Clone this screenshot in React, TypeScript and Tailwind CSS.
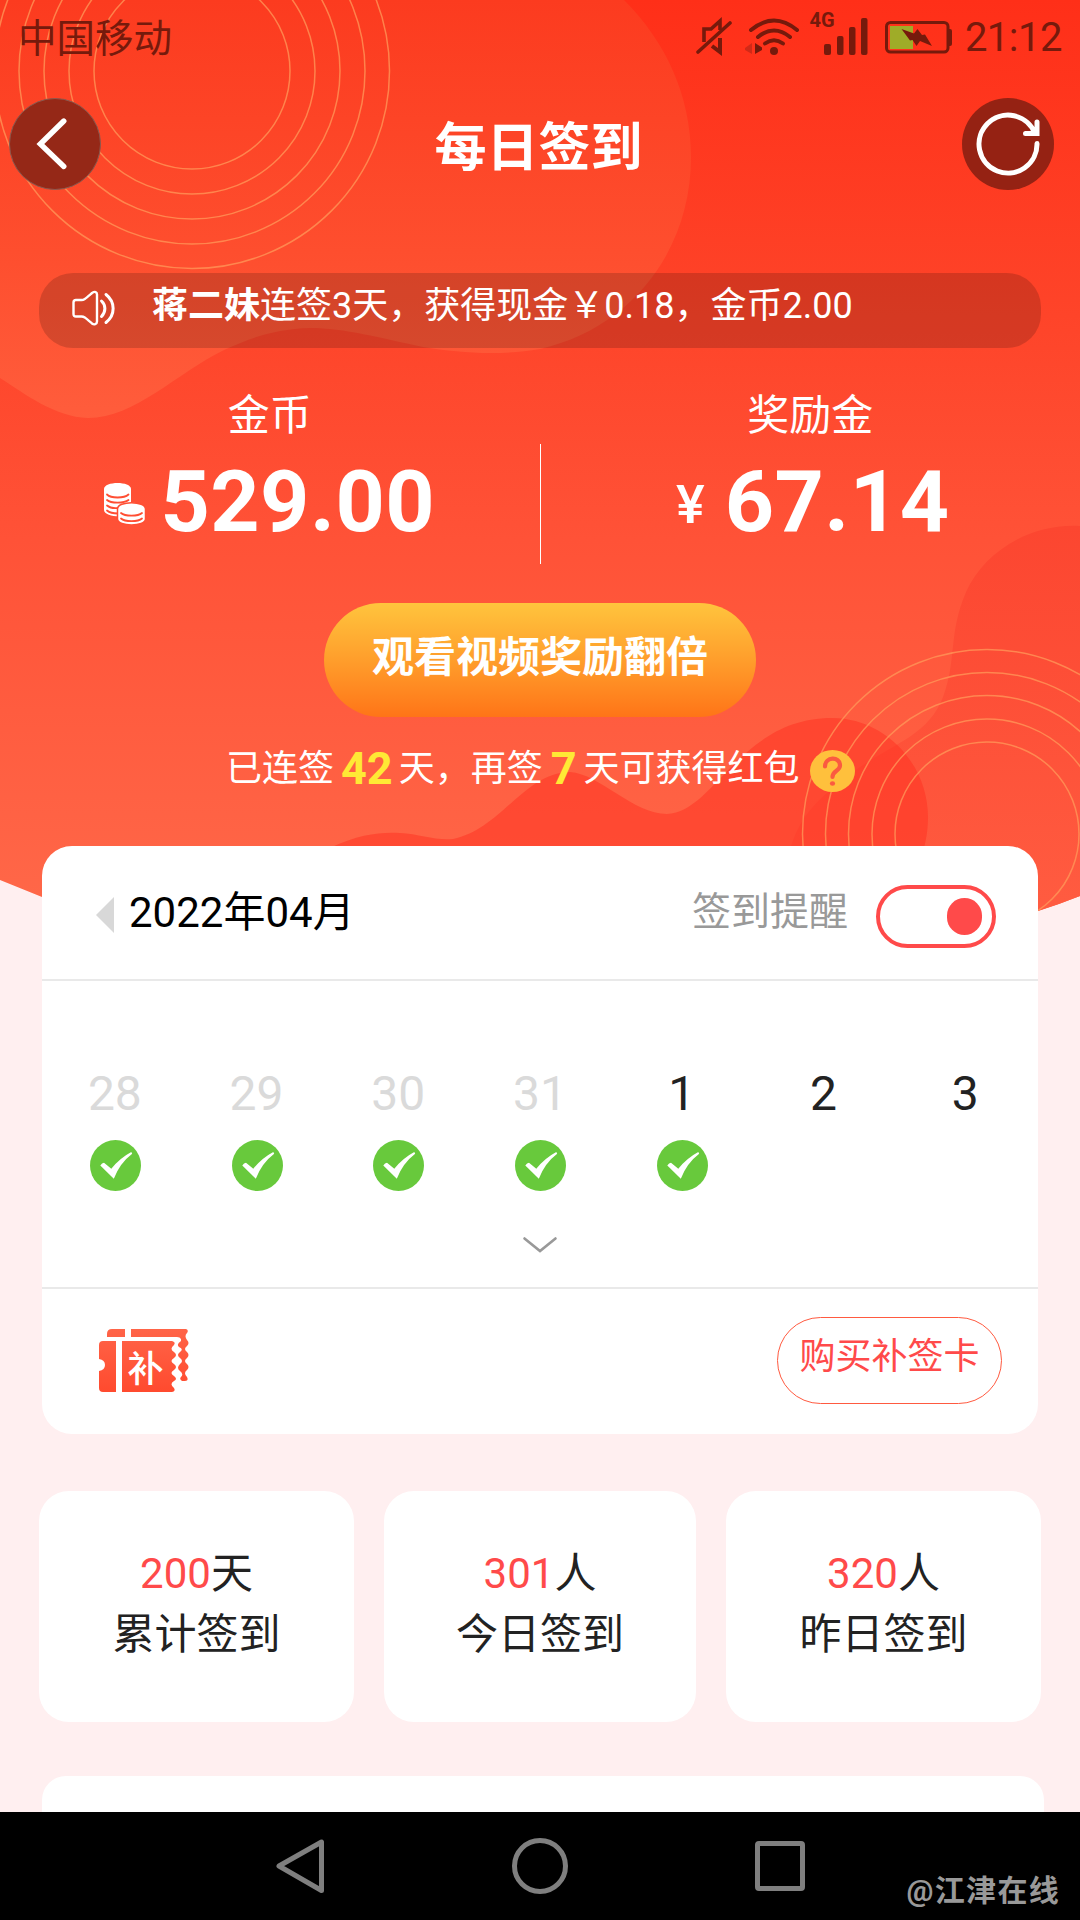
import { clsx } from 'clsx';

interface IDay {
  day: number;
  muted: boolean;
  signed: boolean;
}

interface IStat {
  value: number;
  unit: string;
  label: string;
  width: string;
}

const days: IDay[] = [
  { day: 28, muted: true, signed: true },
  { day: 29, muted: true, signed: true },
  { day: 30, muted: true, signed: true },
  { day: 31, muted: true, signed: true },
  { day: 1, muted: false, signed: true },
  { day: 2, muted: false, signed: false },
  { day: 3, muted: false, signed: false },
];

const stats: IStat[] = [
  { value: 200, unit: '天', label: '累计签到', width: 'w-[315px]' },
  { value: 301, unit: '人', label: '今日签到', width: 'w-[312px]' },
  { value: 320, unit: '人', label: '昨日签到', width: 'w-[315px]' },
];

const topRings = [98, 123, 148, 173, 197.5];
const bottomRings = [92, 115, 138.5, 161.5, 184.5];

const HeaderBackground = () => (
  <svg
    className="absolute top-0 left-0 -z-10"
    width="1080"
    height="960"
    viewBox="0 0 1080 960"
    fill="none"
  >
    <defs>
      <linearGradient id="sky" x1="0" y1="0" x2="0" y2="900" gradientUnits="userSpaceOnUse">
        <stop offset="0" stopColor="#ff2f18" />
        <stop offset="0.35" stopColor="#fe4429" />
        <stop offset="0.6" stopColor="#ff5237" />
        <stop offset="1" stopColor="#ff6748" />
      </linearGradient>
      <linearGradient id="cloud" x1="0" y1="0" x2="0" y2="420" gradientUnits="userSpaceOnUse">
        <stop offset="0" stopColor="#fc3b1f" />
        <stop offset="0.6" stopColor="#fe4e2e" />
        <stop offset="1" stopColor="#ff5d3c" />
      </linearGradient>
      <linearGradient id="blob" x1="0" y1="526" x2="0" y2="900" gradientUnits="userSpaceOnUse">
        <stop offset="0" stopColor="#fc4630" />
        <stop offset="1" stopColor="#ff5b40" />
      </linearGradient>
      <clipPath id="sheet">
        <path d="M0 0H1080V896Q1060 904 1038 911Q540 1080 42 897L0 880Z" />
      </clipPath>
    </defs>
    <g clipPath="url(#sheet)">
      <path d="M0 0H1080V960H0Z" fill="url(#sky)" />
      <path
        d="M0 0H624C666 42 691 96 691 157C691 250 632 328 540 349C500 356 460 353 423 347C380 338 345 328 310 328C275 329 250 338 224 350C175 374 135 418 88 418C55 417 25 394 0 378Z"
        fill="url(#cloud)"
      />
      <path
        d="M1080 526C1030 523 984 552 966 592C948 634 957 660 943 697C927 739 886 745 848 776C815 800 798 820 790 850V960H1080Z"
        fill="url(#blob)"
      />
      <path
        d="M330 848C360 834 380 832 400 833C420 834 436 841 453 839C500 830 525 772 570 772C600 774 633 814 667 814C715 812 740 718 832 718C885 718 928 764 928 817C928 835 924 850 920 860H330Z"
        fill="#ff3020"
        fillOpacity="0.5"
      />
      <g stroke="#ff9a5a" strokeWidth="1.5" strokeOpacity="0.75">
        {topRings.map((r) => (
          <circle key={r} cx="192" cy="71" r={r} />
        ))}
        {bottomRings.map((r) => (
          <circle key={r} cx="987" cy="834" r={r} />
        ))}
      </g>
    </g>
  </svg>
);

const StatusBar = () => (
  <div className="flex h-[75px] items-center justify-between pr-[18px] pl-[18px] text-[#761a0c]">
    <span className="pt-[3px] text-[38.5px] leading-[38px]">中国移动</span>
    <div className="flex items-center">
      <svg width="256" height="75" viewBox="695 0 256 75" fill="none">
        <g stroke="currentColor" strokeWidth="3.6">
          <path d="M697 52L729 23" strokeLinecap="round" />
          <path d="M703 42V29H710L719 21V30" />
          <path d="M711 46L719 52V38" strokeWidth="4" />
        </g>
        <g stroke="currentColor" strokeWidth="4" strokeLinecap="round">
          <path d="M750 30Q773 11 796 30" />
          <path d="M757 37Q773 24 789 37" />
          <path d="M764 43.5Q773 37 782 43.5" />
        </g>
        <circle cx="773" cy="51" r="4" fill="currentColor" />
        <path d="M754 43L761 47.5V50L754 54Z" fill="currentColor" />
        <path d="M751 43V54L744 50V48Z" fill="#d02a18" />
        <text
          x="808.5"
          y="27"
          fontSize="20"
          fontWeight="700"
          fill="currentColor"
          fontFamily="Roboto, sans-serif"
        >
          4G
        </text>
        <g fill="currentColor">
          <rect x="823" y="44" width="7" height="11" rx="2" />
          <rect x="836" y="36" width="6.5" height="19" rx="2" />
          <rect x="848" y="27" width="6.5" height="28" rx="2" />
          <rect x="860" y="18" width="6.5" height="37" rx="2" />
          <rect x="946" y="29" width="5" height="17" rx="2" />
        </g>
        <rect x="889" y="26" width="23" height="23" fill="#9fac28" />
        <rect x="885.5" y="22.5" width="61.5" height="29.5" rx="4" stroke="currentColor" strokeWidth="3" />
        <path d="M900.500 29L913 33.500L916.500 29L921 35L924 34.500L931 46L919 41L915.500 46L911.500 40L909 40.500Z" fill="currentColor" />
      </svg>
      <span className="ml-[13px] text-[40px] leading-[40px] tracking-[-0.5px]">21:12</span>
    </div>
  </div>
);

const SpeakerIcon = () => (
  <svg
    className="mb-[5px]"
    width="44"
    height="36"
    viewBox="0 0 44 36"
    fill="none"
    stroke="#fff"
    strokeLinejoin="round"
  >
    <path
      d="M4 10H9.500C12 10 13 9 20 3C23 1 25 2 25 4.500V31.500C25 34.500 22 35 20 33.500C13 27.500 12 26.500 9.500 26.500H4Q1.500 26.500 1.500 24V12.500Q1.500 10 4 10Z"
      strokeWidth="2.4"
    />
    <path d="M29.500 11C34 15 34 22 29.500 26.500" strokeWidth="3" strokeLinecap="round" />
    <path d="M34 4.500C43.500 12 43.500 25 34 32.500" strokeWidth="3" strokeLinecap="round" />
  </svg>
);

const CoinsIcon = () => (
  <svg className="mt-1" width="41" height="42" viewBox="0 0 41 42" fill="none">
    <path d="M0 6C0 -2 27 -2 27 6V29C27 35 0 35 0 27Z" fill="#fff" />
    <g stroke="#ff4e33" strokeWidth="1.8" strokeLinecap="round">
      <path d="M3 11.500C7 15.500 20 15.500 24.500 11.500" />
      <path d="M3 17C7 20.500 20 20.500 24.500 17" />
      <path d="M3 22.500C6 25 10 25.500 14 25" />
      <path d="M3 27.500C6 30 10 30.500 14 30.500" />
    </g>
    <path
      d="M13.500 26C13.500 17.500 41.500 17.500 41.500 26V36C41.500 44 13.500 44 13.500 36Z"
      fill="#fff"
      stroke="#ff4e33"
      strokeWidth="1.5"
    />
    <g stroke="#ff4e33" strokeWidth="1.8" strokeLinecap="round">
      <path d="M17 30C21 33.500 34 33.500 38 30" />
      <path d="M17 35.500C21 39 34 39 38 35.500" />
    </g>
  </svg>
);

const CheckIcon = () => (
  <svg width="51" height="51" viewBox="0 0 51 51">
    <circle cx="25.500" cy="25.500" r="25.500" fill="#68c93c" />
    <path
      d="M10.300 25.500Q12 23 14 22.800L21.300 28.700Q30 18 41.300 12L42.200 13.800Q30 23 23.800 38.700Z"
      fill="#fff"
    />
  </svg>
);

const TicketIcon = () => (
  <svg width="90" height="64" viewBox="0 0 90 64">
    <defs>
      <linearGradient id="ticket" x1="0" y1="0" x2="0" y2="64" gradientUnits="userSpaceOnUse">
        <stop offset="0" stopColor="#ff6448" />
        <stop offset="1" stopColor="#ff4a2e" />
      </linearGradient>
    </defs>
    <g fill="url(#ticket)">
      <path d="M8 8V5Q8 0 13 0H26V8Z" />
      <path d="M32 0H87Q90 1 88 4Q85 7 88 11Q91 14 88 17Q84 20 88 23Q91 26 88 29Q84 32 88 35Q91 38 88 41Q84 44 88 48Q90 52 86 52H83Q80 50 82 48Q85 45 81 42Q77 39 81 35Q85 32 81 29Q77 26 81 23Q85 20 80 18Q77 15 82 12V10Q81 8 78 8H32Z" />
      <path d="M0 16Q0 12 4 12H17V63H4Q0 63 0 59V42Q6 41 6 36Q6 31 0 30Z" />
      <path d="M23 12H73Q77 13 75 16Q70 20 75 23Q79 26 75 29Q70 32 75 35Q79 38 75 41Q70 44 75 47Q79 50 75 52Q70 55 75 59Q77 62 73 63H23Z" />
    </g>
    <text
      x="28.500"
      y="53"
      fontSize="36"
      fontWeight="500"
      fill="#fff"
      fontFamily="'Noto Sans CJK SC', sans-serif"
    >
      补
    </text>
  </svg>
);

const TitleBar = () => (
  <div className="mt-[23px] flex h-[92px] items-center justify-between pr-[26px] pl-[9px]">
    <button className="flex size-[92px] items-center justify-center rounded-full border border-[#8a5a50] bg-[#952817]">
      <svg width="92" height="92" viewBox="0 0 92 92" fill="none">
        <path
          d="M55 22.500L31 46L55 69"
          stroke="#fff"
          strokeWidth="5.500"
          strokeLinecap="round"
        />
      </svg>
    </button>
    <h1 className="pt-2.5 pl-[14px] text-[52px] leading-[52px] font-bold">每日签到</h1>
    <button className="size-[92px] rounded-full bg-[#952213]">
      <svg width="92" height="92" viewBox="0 0 92 92" fill="none">
        <path
          d="M75 45.500A29 29 0 1 1 73 35.500M75 24V35.500H63.500"
          stroke="#fff"
          strokeWidth="5"
          strokeLinecap="round"
        />
      </svg>
    </button>
  </div>
);

const Balances = () => (
  <div className="mt-[43px] flex h-[173px]">
    <div className="flex flex-1 flex-col items-center">
      <span className="text-[42px] leading-[50px]">金币</span>
      <div className="mt-[18px] flex items-center">
        <CoinsIcon />
        <span className="ml-[15px] text-[86px] leading-[86px] font-bold tracking-[0.5px]">
          529.00
        </span>
      </div>
    </div>
    <div className="mt-[53px] h-[120px] w-px bg-white" />
    <div className="flex flex-1 flex-col items-center">
      <span className="text-[42px] leading-[50px]">奖励金</span>
      <div className="mt-[18px] flex items-center pl-[5px]">
        <span className="pt-[5px] text-[54px] leading-[54px] font-medium">¥</span>
        <span className="ml-5 text-[86px] leading-[86px] font-bold tracking-[0.5px]">67.14</span>
      </div>
    </div>
  </div>
);

const Calendar = () => (
  <section className="mx-[42px] mt-[52px] h-[588px] rounded-[30px] bg-white text-[#222]">
    <div className="flex h-[135px] items-center justify-between border-b-2 border-[#e9e9e9] pr-[42px] pl-[54px]">
      <div className="flex items-center">
        <svg className="mt-1" width="18" height="36" viewBox="0 0 18 36">
          <path d="M18 0V36L0 18Z" fill="#d8d8d8" />
        </svg>
        <span className="ml-[15px] text-[42px] leading-[42px] text-black">2022年04月</span>
      </div>
      <div className="flex items-center">
        <span className="text-[39px] leading-[39px] text-[#999]">签到提醒</span>
        <div className="mt-[7px] ml-7 flex h-[63px] w-[120px] items-center justify-end rounded-full border-4 border-[#ff4a4a] pr-2.5">
          <div className="h-[37px] w-[35px] rounded-full bg-[#ff4a4a]" />
        </div>
      </div>
    </div>
    <div className="flex h-[308px] flex-col items-center border-b-2 border-[#e9e9e9] pt-[89px]">
      <div className="grid w-full grid-cols-7 px-0.5">
        {days.map(({ day, muted, signed }) => (
          <div key={day} className="flex flex-col items-center">
            <span
              className={clsx(
                'text-[48px] leading-[48px]',
                muted ? 'text-[#dadada]' : 'text-[#222]'
              )}
            >
              {day}
            </span>
            <div className="mt-[22px] ml-px h-[51px]">{signed && <CheckIcon />}</div>
          </div>
        ))}
      </div>
      <svg className="mt-[45px]" width="36" height="18" viewBox="0 0 36 18" fill="none">
        <path d="M2.500 2.500L18 15L33.500 2.500" stroke="#999" strokeWidth="2.600" strokeLinecap="round" />
      </svg>
    </div>
    <div className="flex items-start justify-between pr-9 pl-[57px]">
      <div className="mt-10">
        <TicketIcon />
      </div>
      <button className="mt-7 h-[87px] w-[225px] rounded-full border border-[#ff5a40] pb-2 text-[36px] leading-[36px] text-[#ff4a4a]">
        购买补签卡
      </button>
    </div>
  </section>
);

const NavBar = () => (
  <nav className="relative h-[108px] bg-black">
    <svg width="1080" height="108" viewBox="0 0 1080 108" fill="none" stroke="#7f7f7f" strokeWidth="5">
      <path d="M321.500 30V78.500L279 54Z" strokeLinejoin="round" />
      <circle cx="540" cy="54" r="25.500" />
      <rect x="757.500" y="31.500" width="45" height="45" rx="1.500" />
    </svg>
    <span className="absolute right-[20px] bottom-3.5 text-[30px] leading-[30px] font-bold tracking-[1.3px] text-[#999]">
      @江津在线
    </span>
  </nav>
);

const App = () => {
  return (
    <div className="relative isolate flex h-[1920px] w-[1080px] flex-col overflow-hidden bg-[#ffeff0] font-[Roboto,'Noto_Sans_CJK_SC',sans-serif] text-white">
      <HeaderBackground />
      <StatusBar />
      <TitleBar />

      <div className="mx-[39px] mt-[83px] flex h-[75px] items-center rounded-[34px] bg-black/16 pl-[33px]">
        <SpeakerIcon />
        <p className="ml-9 pb-2.5 text-[36px] leading-[36px]">
          <b>蒋二妹</b>连签3天，获得现金￥0.18，金币2.00
        </p>
      </div>

      <Balances />

      <button className="mx-auto mt-[39px] h-[114px] w-[432px] rounded-full bg-linear-to-b from-[#ffc43d] to-[#ff7417] pb-1 text-[42px] leading-[42px] font-bold">
        观看视频奖励翻倍
      </button>

      <div className="mt-[27px] flex h-[50px] items-center pl-[226px] text-[36px] leading-[50px]">
        <span>已连签</span>
        <b className="mr-1.5 ml-[7px] text-[45px] text-[#ffe935]">42</b>
        <span>天，再签</span>
        <b className="mr-[7px] ml-2 text-[45px] text-[#ffe935]">7</b>
        <span>天可获得红包</span>
        <svg className="mt-1 ml-[10px]" width="45" height="42" viewBox="0 0 45 42" fill="none">
          <ellipse cx="22.500" cy="21" rx="22.500" ry="21" fill="#ffc03c" />
          <path
            d="M15 16.500C15 6.500 30 6 30 15.500C30 21 22.500 20.500 22.500 27"
            stroke="#fb5a40"
            strokeWidth="4.200"
            strokeLinecap="round"
          />
          <ellipse cx="22.500" cy="33.500" rx="2.600" ry="2.200" fill="#fb5a40" />
        </svg>
      </div>

      <Calendar />

      <div className="mx-[39px] mt-[57px] flex justify-between">
        {stats.map(({ value, unit, label, width }) => (
          <div
            key={label}
            className={clsx(
              'flex h-[231px] flex-col items-center rounded-[30px] bg-white pt-[52px] text-[42px] leading-[61px] text-[#222]',
              width
            )}
          >
            <span>
              <span className="text-[#ff4a4a]">{value}</span>
              {unit}
            </span>
            <span>{label}</span>
          </div>
        ))}
      </div>

      <div className="mt-[54px] mr-9 ml-[42px] h-9 rounded-t-[24px] bg-white" />
      <NavBar />
    </div>
  );
};

export default App;
